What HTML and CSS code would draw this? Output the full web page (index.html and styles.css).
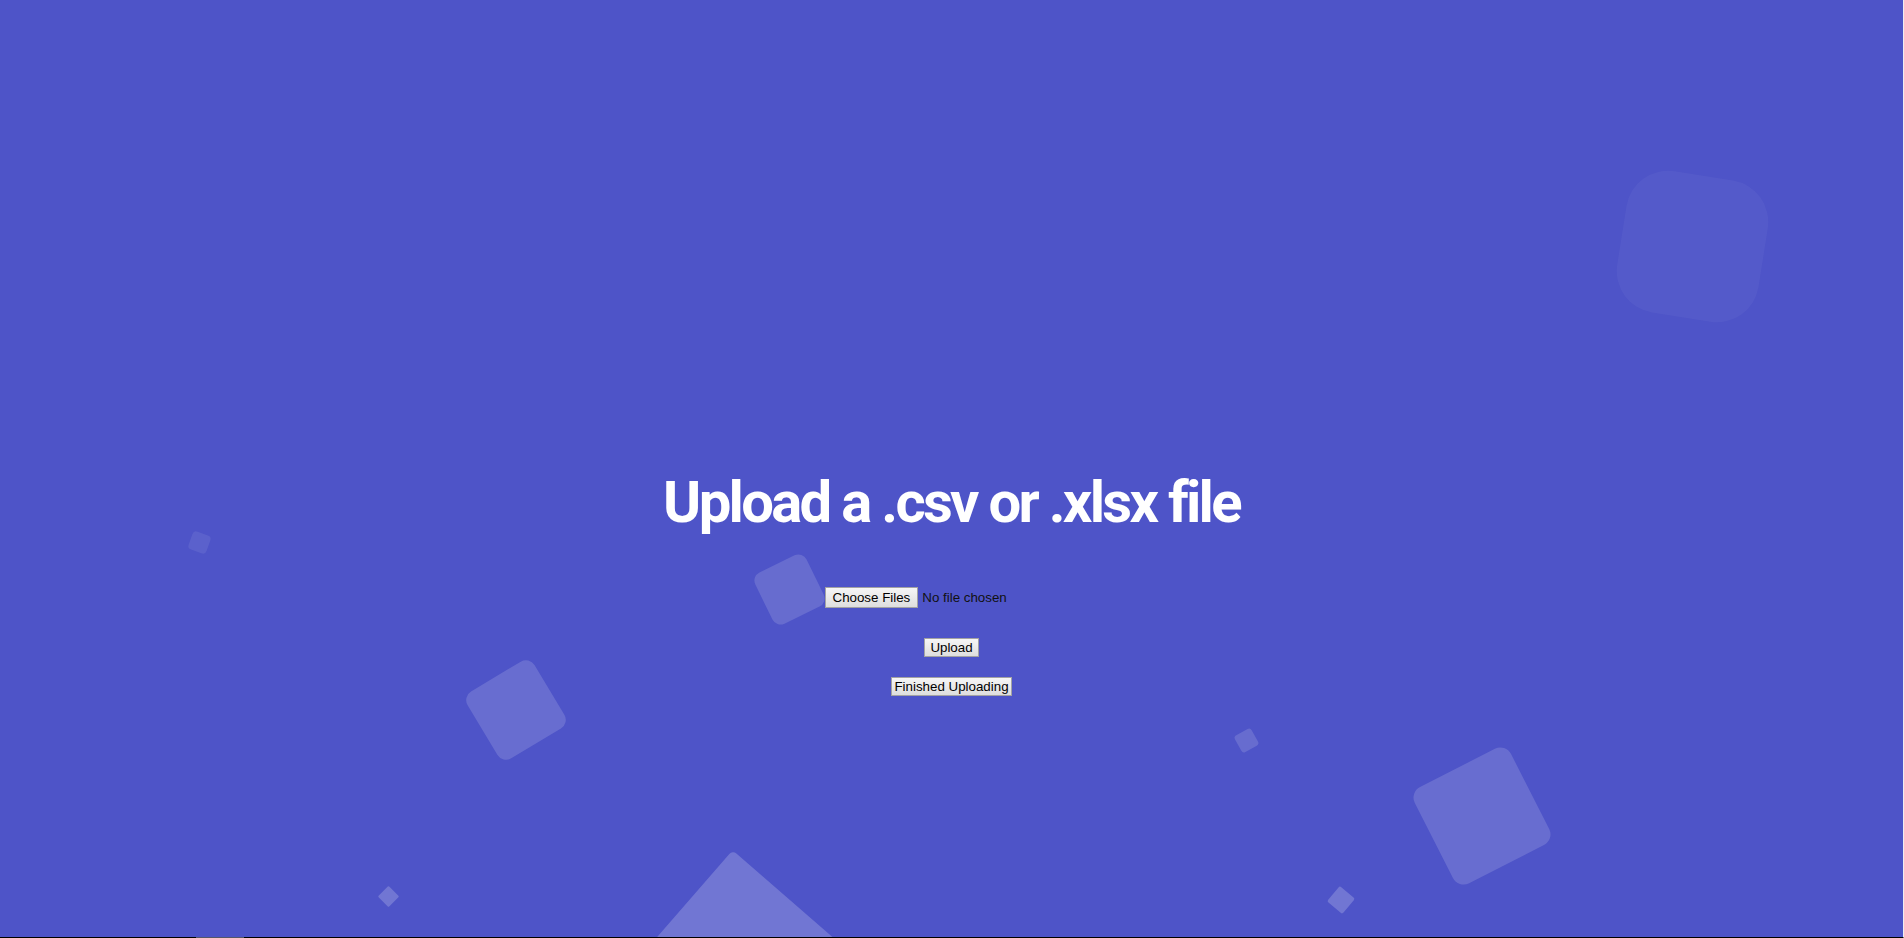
FILE: index.html
```html
<!DOCTYPE html>
<html lang="en">
<head>
<meta charset="utf-8">
<title>Upload</title>
<link rel="stylesheet" href="styles.css">
</head>
<body>
<div class="page">
  <div class="area">
    <div class="shapes" aria-hidden="true">
      <div class="shape s1"></div>
      <div class="shape s2"></div>
      <div class="shape s3"></div>
      <div class="shape s4"></div>
      <div class="shape s5"></div>
      <div class="shape s6"></div>
      <div class="shape s7"></div>
      <div class="shape s8"></div>
      <div class="shape s9"></div>
    </div>
    <main class="content">
      <h1 class="title">Upload a .csv or .xlsx file</h1>
      <form class="upload-form" onsubmit="return false">
        <input type="file" class="file-input" multiple>
        <button type="button" class="btn btn-upload">Upload</button>
        <button type="button" class="btn btn-finish">Finished Uploading</button>
      </form>
    </main>
  </div>
  <div class="edge-mark"></div>
</div>
</body>
</html>
```

FILE: styles.css
```css
html, body {
  margin: 0;
  padding: 0;
}
body {
  background: #000;
  font-family: "Liberation Sans", Arial, sans-serif;
}
.page {
  position: relative;
  width: 1904px;
  height: 938px;
  box-sizing: border-box;
  border-right: 1px solid #eeeef2;
  border-bottom: 1px solid #000;
  display: flex;
  flex-direction: column;
}
.area {
  position: relative;
  flex: 1;
  background: #4e54c8;
  overflow: hidden;
}
.shapes {
  position: absolute;
  inset: 0;
}
.shape {
  position: absolute;
  background: rgba(255, 255, 255, 0.15);
}
.s1 { left: 1621px; top: 175px; width: 143px; height: 143px; border-radius: 42px; transform: rotate(9deg); background: rgba(255,255,255,0.04); }
.s2 { left: 477px; top: 671px; width: 78px; height: 78px; border-radius: 10px; transform: rotate(-31deg); background: rgba(255,255,255,0.15); }
.s3 { left: 761px; top: 561px; width: 57px; height: 57px; border-radius: 9px; transform: rotate(-26deg); background: rgba(255,255,255,0.14); }
.s4 { left: 665px; top: 881px; width: 150px; height: 150px; border-radius: 5px; transform: rotate(41deg); background: rgba(255,255,255,0.2); }
.s5 { left: 1428px; top: 762px; width: 108px; height: 108px; border-radius: 12px; transform: rotate(-27deg); background: rgba(255,255,255,0.15); }
.s6 { left: 190px; top: 533px; width: 19px; height: 19px; border-radius: 4px; transform: rotate(20deg); background: rgba(255,255,255,0.08); }
.s7 { left: 1237px; top: 731px; width: 19px; height: 19px; border-radius: 3px; transform: rotate(-29deg); background: rgba(255,255,255,0.14); }
.s8 { left: 1331px; top: 890px; width: 20px; height: 20px; border-radius: 2px; transform: rotate(40deg); background: rgba(255,255,255,0.2); }
.s9 { left: 381px; top: 889px; width: 15px; height: 15px; border-radius: 1px; transform: rotate(45deg); background: rgba(255,255,255,0.2); }

.edge-mark {
  position: absolute;
  left: 196px;
  bottom: -1px;
  width: 48px;
  height: 1px;
  background: #55566a;
}

.content {
  position: relative;
  z-index: 1;
  display: flex;
  flex-direction: column;
  align-items: center;
  padding-top: 473px;
}
.title {
  margin: 0;
  font-family: Roboto, "Liberation Sans", sans-serif;
  font-weight: 700;
  font-size: 58px;
  line-height: 1;
  letter-spacing: -2.7px;
  color: #fff;
}
.upload-form {
  display: flex;
  flex-direction: column;
  align-items: center;
  margin-top: 56px;
}
.file-input {
  width: 254px;
  font-family: "Liberation Sans", Arial, sans-serif;
  font-size: 13.333px;
  color: #111;
  line-height: 15px;
}
.file-input::file-selector-button {
  font-family: "Liberation Sans", Arial, sans-serif;
  font-size: 13.333px;
  line-height: 15px;
  color: #000;
  padding: 2px 7px;
  margin: 0 4px 0 0;
  border: 1px solid #a3a3a3;
  border-radius: 0;
  background: linear-gradient(#f6f6f6, #dedede);
}
.btn {
  font-family: "Liberation Sans", Arial, sans-serif;
  font-size: 13.333px;
  line-height: 15px;
  color: #000;
  border: 1px solid #a3a3a3;
  border-radius: 0;
  background: linear-gradient(#f6f6f6, #dedede);
  padding: 1px 5px;
  margin: 0;
}
.btn-upload {
  margin-top: 30px;
}
.btn-finish {
  margin-top: 20px;
  padding: 1px 2px;
}
```
